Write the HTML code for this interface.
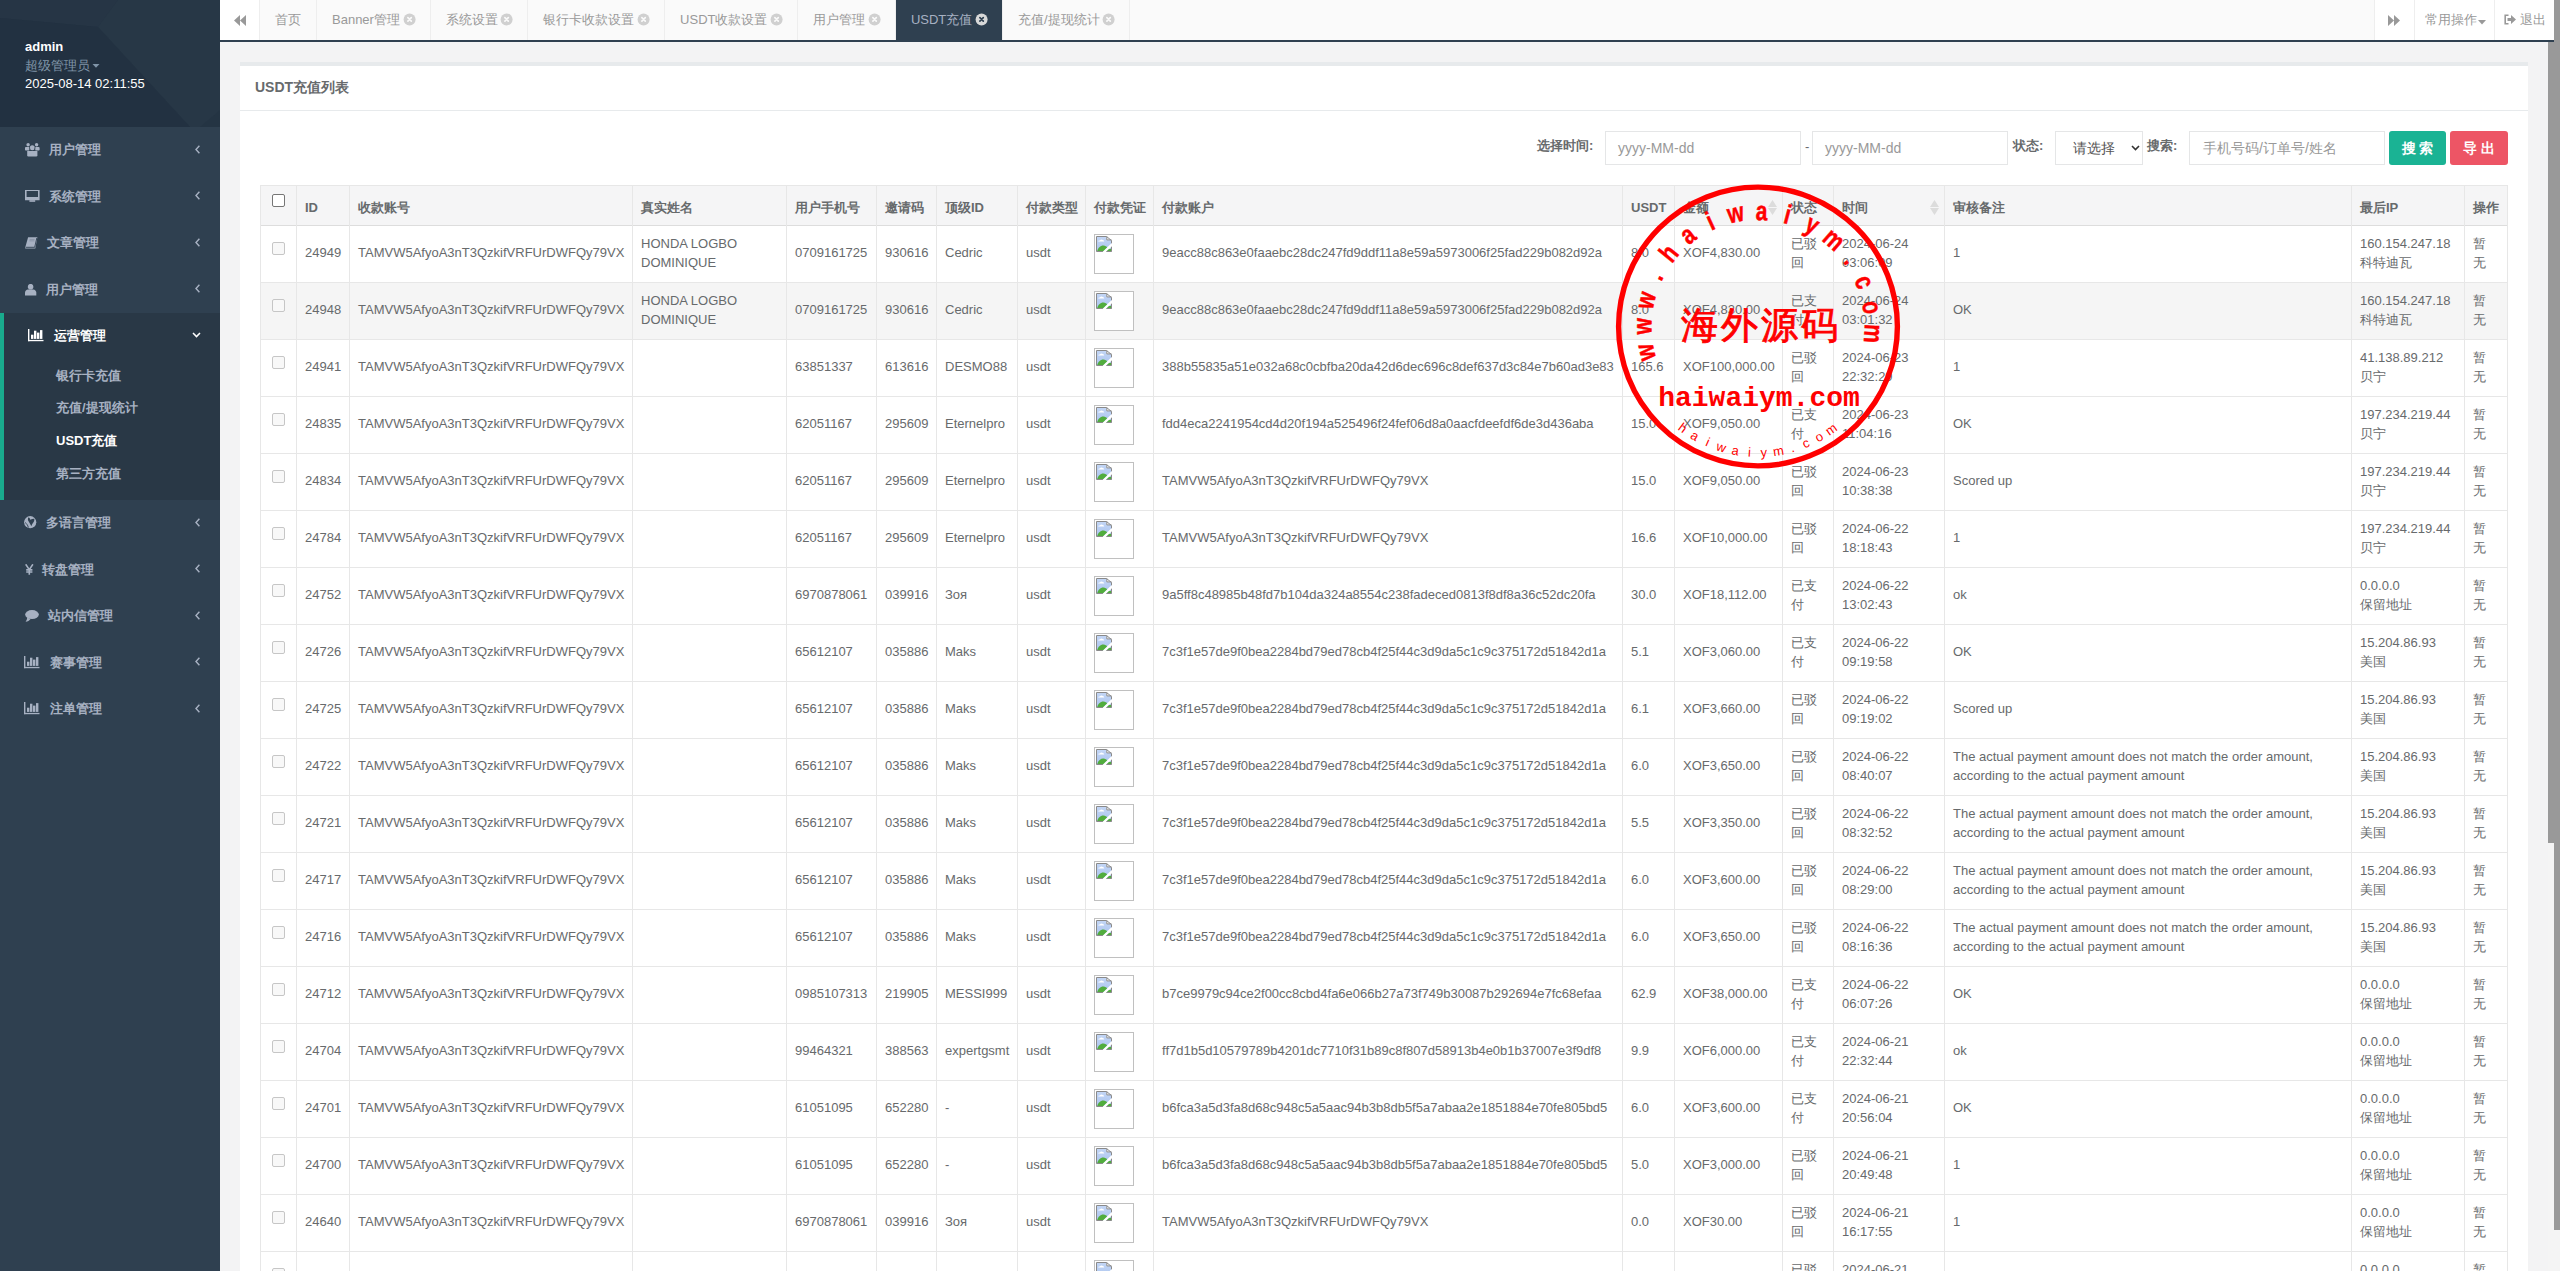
<!DOCTYPE html><html><head><meta charset="utf-8"><title>USDT充值</title><style>
*{box-sizing:border-box;margin:0;padding:0}
html,body{width:2560px;height:1271px;overflow:hidden}
body{position:relative;font-family:"Liberation Sans",sans-serif;font-size:13px;color:#676a6c;background:#f3f3f4;line-height:18.57px}
.abs{position:absolute}
#side{position:absolute;left:0;top:0;width:220px;height:1271px;background:#2f4050;overflow:hidden}
#hdr{position:absolute;left:0;top:0;width:220px;height:127px;background:#243443}
#hdr .t{position:absolute;left:25px;white-space:nowrap}
#menu{position:absolute;left:0;top:127px;width:220px}
#menu li{list-style:none;position:relative}
#menu > li > a{display:block;height:46.57px;padding:14px 20px 14px 25px;color:#a7b1c2;font-weight:bold;white-space:nowrap;position:relative}
#menu > li.active{background:#293846;border-left:4px solid #19aa8d}
#menu > li.active > a{color:#fff;padding-left:25px}
#menu .sub a{display:block;height:32.57px;padding:7px 10px 7px 52px;color:#a7b1c2;font-weight:bold;white-space:nowrap}
#menu .sub a.on{color:#fff}
#menu .sub{padding-bottom:10px}
#menu .ic{position:absolute;top:0;left:0}
#menu .lbl{position:absolute;top:14px}
#menu .arr{position:absolute;right:20px;top:20px;line-height:0}
#menu .arr svg{display:block}
#tabs{position:absolute;left:220px;top:0;width:2334px;height:42px;border-bottom:2px solid #2f4050;background:#fafafa}
#tabs .roll{position:absolute;top:0;height:40px;background:#fff;color:#999;text-align:center}
#tabs .pt{position:absolute;left:40px;top:0;height:40px;white-space:nowrap}
#tabs .pt a{float:left;height:40px;line-height:40px;padding:0 15px;border-right:1px solid #eee;color:#999;text-decoration:none}
#tabs .pt a.active{background:#2f4050;color:#a7b1c2}
.xc{display:inline-block;width:11.14px;height:11px;vertical-align:-1px;margin-left:3.6px}
#content{position:absolute;left:220px;top:42px;width:2328px;height:1229px;background:#f3f3f4}
#sb1{position:absolute;left:2548px;top:42px;width:6px;height:1229px;background:#f4f4f4}
#sb1 i{position:absolute;left:0;top:0;width:6px;height:801px;background:#999}
#sb2{position:absolute;left:2554px;top:0;width:6px;height:1271px;background:#f4f4f4}
#sb2 i{position:absolute;left:0;top:0;width:6px;height:1230px;background:#999}
#ibox{position:absolute;left:240px;top:62px;width:2288px;height:1300px;background:#fff}
#ititle{position:absolute;left:0;top:0;width:2288px;height:48px;border-top:4px solid #e7eaec;background:#fff}
#ititle h5{position:absolute;left:15px;top:14px;font-size:14px;font-weight:bold;line-height:15.4px;color:#676a6c;white-space:nowrap}
#icont{position:absolute;left:0;top:48px;width:2288px;height:1300px;border-top:1px solid #e7eaec}
.lab{position:absolute;font-weight:bold;white-space:nowrap;color:#676a6c}
.inp{position:absolute;top:131px;height:34px;border:1px solid #e5e6e7;background:#fff;color:#999;padding:0 12px;line-height:32px;white-space:nowrap;font-size:14px}
.btn{position:absolute;top:131px;height:34px;border-radius:3px;color:#fff;font-weight:bold;text-align:center;line-height:34px;white-space:nowrap;font-size:14px}
.vl{position:absolute;width:1px;background:#e7e7e7}
.hl{position:absolute;height:1px;background:#e7e7e7}
.cell{position:absolute;padding:0 8px;line-height:19px;overflow:hidden}
.cell span{display:block}
.th{position:absolute;font-weight:bold;white-space:nowrap;line-height:19px}
.cb{position:absolute;width:13px;height:13px;border:1px solid #c6c6c6;border-radius:2px;background:#f8f8f8}
.img{position:absolute;width:40px;height:40px;border:1px solid #c0c0c0;background:#fff}
</style></head><body>
<div id="side">
<div id="hdr"><svg class="abs" style="left:0;top:0" width="220" height="127" viewBox="0 0 220 127"><rect width="220" height="127" fill="#243443"/><polygon points="0,0 118,0 98,27 0,18" fill="#263545"/><polygon points="118,0 220,0 220,110 200,127 190,127 98,27" fill="#273746"/><polygon points="0,18 98,27 190,127 0,127" fill="#223141"/></svg><div class="t" style="top:38px;color:#fff;font-weight:bold">admin</div><div class="t" style="top:57px;color:#8095a8">超级管理员<svg width="8" height="4" style="margin-left:2px;vertical-align:2px" viewBox="0 0 8 4"><path d="M0.5 0H7.5L4 3.8z" fill="#8095a8"/></svg></div><div class="t" style="top:75px;color:#fff">2025-08-14 02:11:55</div></div>
<ul id="menu">
<li><a><span class="ic" style="left:24.7px;top:15.7px"><svg width="15" height="14" viewBox="0 0 15 14"><g fill="#a7b1c2"><circle cx="3.1" cy="1.8" r="1.7"/><circle cx="11.6" cy="1.8" r="1.7"/><rect x="0" y="4.1" width="4.6" height="3.4" rx="0.8"/><rect x="10" y="4.1" width="4.6" height="3.4" rx="0.8"/><circle cx="7.3" cy="4.7" r="2.5"/><path d="M2.2 7.9H12.4V12.3Q12.4 13.5 11.2 13.5H3.4Q2.2 13.5 2.2 12.3z"/></g><path d="M4.6 4.3L4.8 7.6M10 4.3L9.8 7.6" stroke="#2f4050" stroke-width="0.7"/></svg></span><span class="lbl" style="left:49px">用户管理</span><span class="arr" style="right:20px;top:17.5px"><svg width="5" height="9" viewBox="0 0 5 9"><path d="M4.4 0.8L1 4.5L4.4 8.2" fill="none" stroke="#a7b1c2" stroke-width="1.4"/></svg></span></a></li>
<li><a><span class="ic" style="left:24.7px;top:15.4px"><svg width="15" height="12" viewBox="0 0 15 12"><path fill="#a7b1c2" fill-rule="evenodd" d="M0 0H14.6V10.2H0z M1.6 1.1V6.9H13V1.1z"/><rect x="4.4" y="10.2" width="5.8" height="1.6" fill="#a7b1c2"/></svg></span><span class="lbl" style="left:49px">系统管理</span><span class="arr" style="right:20px;top:17.5px"><svg width="5" height="9" viewBox="0 0 5 9"><path d="M4.4 0.8L1 4.5L4.4 8.2" fill="none" stroke="#a7b1c2" stroke-width="1.4"/></svg></span></a></li>
<li><a><span class="ic" style="left:24.7px;top:16.3px"><svg width="13" height="12" viewBox="0 0 13 12"><path d="M3.1 0.3H12.4L10.3 11.6H0.2L0.5 9.6z" fill="#a7b1c2"/><path d="M0.9 10.3H9.7L11.8 1" fill="none" stroke="#2f4050" stroke-width="0.9"/><rect x="4.6" y="1.9" width="5" height="0.9" fill="#8893a6"/><rect x="4.4" y="3.4" width="5" height="0.9" fill="#8893a6"/></svg></span><span class="lbl" style="left:47px">文章管理</span><span class="arr" style="right:20px;top:17.5px"><svg width="5" height="9" viewBox="0 0 5 9"><path d="M4.4 0.8L1 4.5L4.4 8.2" fill="none" stroke="#a7b1c2" stroke-width="1.4"/></svg></span></a></li>
<li><a><span class="ic" style="left:24.7px;top:15.9px"><svg width="12" height="12" viewBox="0 0 12 12"><g fill="#a7b1c2"><circle cx="5.6" cy="2.7" r="2.8"/><path d="M0 11.6V8.6C0 6.6 1.4 5.6 3 5.4H8.3C9.9 5.6 11.3 6.6 11.3 8.6V11.6z"/></g></svg></span><span class="lbl" style="left:45.5px">用户管理</span><span class="arr" style="right:20px;top:17.5px"><svg width="5" height="9" viewBox="0 0 5 9"><path d="M4.4 0.8L1 4.5L4.4 8.2" fill="none" stroke="#a7b1c2" stroke-width="1.4"/></svg></span></a></li>
<li class="active"><a><span class="ic" style="left:24px;top:15.7px"><svg width="16" height="13" viewBox="0 0 16 13"><g fill="#fff"><rect x="0" y="0" width="1.4" height="12.2"/><rect x="0" y="10.9" width="15.5" height="1.3"/><rect x="3" y="5.7" width="2.4" height="4.2"/><rect x="6" y="1.7" width="2.4" height="8.2"/><rect x="9" y="3.6" width="2.4" height="6.3"/><rect x="12" y="1.1" width="2.4" height="8.8"/></g></svg></span><span class="lbl" style="left:49.8px">运营管理</span><span class="arr" style="right:19px;top:19px"><svg width="9" height="6" viewBox="0 0 9 6"><path d="M1 1L4.5 4.6L8 1" fill="none" stroke="#fff" stroke-width="1.5"/></svg></span></a>
<div class="sub"><a>银行卡充值</a><a>充值/提现统计</a><a class="on">USDT充值</a><a>第三方充值</a></div></li>
<li><a><span class="ic" style="left:24.4px;top:15.7px"><svg width="13" height="13" viewBox="0 0 13 13"><circle cx="6.2" cy="6.2" r="6.1" fill="#a7b1c2"/><path d="M4.2 1.6C5.3 1.3 6.2 2.6 6.1 3.7C7.5 3.2 9 3 10.2 2.8C10.7 4.2 10.1 6 8.6 7.5C7.9 8.4 7.6 9.6 7.4 10.3C6.8 9 6.1 7.9 5.3 6.4C4.5 5.3 3.8 4.5 3.9 3.3z" fill="#2f4050"/><path d="M1.2 6.5C2.5 7.5 3.8 9.3 4.4 11.5" fill="none" stroke="#2f4050" stroke-width="0.9"/></svg></span><span class="lbl" style="left:46px">多语言管理</span><span class="arr" style="right:20px;top:17.5px"><svg width="5" height="9" viewBox="0 0 5 9"><path d="M4.4 0.8L1 4.5L4.4 8.2" fill="none" stroke="#a7b1c2" stroke-width="1.4"/></svg></span></a></li>
<li><a><span class="ic" style="left:24.8px;top:15.8px"><svg width="9" height="11" viewBox="0 0 9 11"><path d="M0.7 0.3L4.3 5.6L7.9 0.3M4.3 5.6V10.8M1.2 5.9H7.4M1.2 8H7.4" fill="none" stroke="#a7b1c2" stroke-width="1.6"/></svg></span><span class="lbl" style="left:42px">转盘管理</span><span class="arr" style="right:20px;top:17.5px"><svg width="5" height="9" viewBox="0 0 5 9"><path d="M4.4 0.8L1 4.5L4.4 8.2" fill="none" stroke="#a7b1c2" stroke-width="1.4"/></svg></span></a></li>
<li><a><span class="ic" style="left:24.7px;top:15.8px"><svg width="14" height="12" viewBox="0 0 14 12"><ellipse cx="7" cy="4.6" rx="6.85" ry="4.5" fill="#a7b1c2"/><path d="M2.2 7.6C2.1 9.3 1.5 10.7 0.6 11.8C2.6 11.5 4.5 10.5 5.6 8.9z" fill="#a7b1c2"/></svg></span><span class="lbl" style="left:48px">站内信管理</span><span class="arr" style="right:20px;top:17.5px"><svg width="5" height="9" viewBox="0 0 5 9"><path d="M4.4 0.8L1 4.5L4.4 8.2" fill="none" stroke="#a7b1c2" stroke-width="1.4"/></svg></span></a></li>
<li><a><span class="ic" style="left:24.4px;top:15.8px"><svg width="16" height="13" viewBox="0 0 16 13"><g fill="#a7b1c2"><rect x="0" y="0" width="1.4" height="12.2"/><rect x="0" y="10.9" width="15.5" height="1.3"/><rect x="3" y="5.7" width="2.4" height="4.2"/><rect x="6" y="1.7" width="2.4" height="8.2"/><rect x="9" y="3.6" width="2.4" height="6.3"/><rect x="12" y="1.1" width="2.4" height="8.8"/></g></svg></span><span class="lbl" style="left:49.7px">赛事管理</span><span class="arr" style="right:20px;top:17.5px"><svg width="5" height="9" viewBox="0 0 5 9"><path d="M4.4 0.8L1 4.5L4.4 8.2" fill="none" stroke="#a7b1c2" stroke-width="1.4"/></svg></span></a></li>
<li><a><span class="ic" style="left:24.4px;top:15.8px"><svg width="16" height="13" viewBox="0 0 16 13"><g fill="#a7b1c2"><rect x="0" y="0" width="1.4" height="12.2"/><rect x="0" y="10.9" width="15.5" height="1.3"/><rect x="3" y="5.7" width="2.4" height="4.2"/><rect x="6" y="1.7" width="2.4" height="8.2"/><rect x="9" y="3.6" width="2.4" height="6.3"/><rect x="12" y="1.1" width="2.4" height="8.8"/></g></svg></span><span class="lbl" style="left:49.7px">注单管理</span><span class="arr" style="right:20px;top:17.5px"><svg width="5" height="9" viewBox="0 0 5 9"><path d="M4.4 0.8L1 4.5L4.4 8.2" fill="none" stroke="#a7b1c2" stroke-width="1.4"/></svg></span></a></li>
</ul></div>
<div id="tabs">
<div class="roll" style="left:0;width:40px;border-right:1px solid #eee"><svg class="abs" style="left:14px;top:15px" width="12" height="11" viewBox="0 0 12 11"><path d="M6 0L0 5.5L6 11zM12 0L6 5.5L12 11z" fill="#999"/></svg></div>
<div class="pt">
<a>首页</a>
<a>Banner管理<svg class="xc" viewBox="0 0 11.14 11" style="overflow:visible"><circle cx="5.6" cy="5.4" r="6" fill="#d0d0d0"/><path d="M3.9 3.7L7.3 7.1M7.3 3.7L3.9 7.1" stroke="#fafafa" stroke-width="1.7" stroke-linecap="round"/></svg></a>
<a>系统设置<svg class="xc" viewBox="0 0 11.14 11" style="overflow:visible"><circle cx="5.6" cy="5.4" r="6" fill="#d0d0d0"/><path d="M3.9 3.7L7.3 7.1M7.3 3.7L3.9 7.1" stroke="#fafafa" stroke-width="1.7" stroke-linecap="round"/></svg></a>
<a>银行卡收款设置<svg class="xc" viewBox="0 0 11.14 11" style="overflow:visible"><circle cx="5.6" cy="5.4" r="6" fill="#d0d0d0"/><path d="M3.9 3.7L7.3 7.1M7.3 3.7L3.9 7.1" stroke="#fafafa" stroke-width="1.7" stroke-linecap="round"/></svg></a>
<a>USDT收款设置<svg class="xc" viewBox="0 0 11.14 11" style="overflow:visible"><circle cx="5.6" cy="5.4" r="6" fill="#d0d0d0"/><path d="M3.9 3.7L7.3 7.1M7.3 3.7L3.9 7.1" stroke="#fafafa" stroke-width="1.7" stroke-linecap="round"/></svg></a>
<a>用户管理<svg class="xc" viewBox="0 0 11.14 11" style="overflow:visible"><circle cx="5.6" cy="5.4" r="6" fill="#d0d0d0"/><path d="M3.9 3.7L7.3 7.1M7.3 3.7L3.9 7.1" stroke="#fafafa" stroke-width="1.7" stroke-linecap="round"/></svg></a>
<a class="active">USDT充值<svg class="xc" viewBox="0 0 11.14 11" style="overflow:visible"><circle cx="5.6" cy="5.4" r="6" fill="#d8d8d8"/><path d="M3.9 3.7L7.3 7.1M7.3 3.7L3.9 7.1" stroke="#2f4050" stroke-width="1.7" stroke-linecap="round"/></svg></a>
<a>充值/提现统计<svg class="xc" viewBox="0 0 11.14 11" style="overflow:visible"><circle cx="5.6" cy="5.4" r="6" fill="#d0d0d0"/><path d="M3.9 3.7L7.3 7.1M7.3 3.7L3.9 7.1" stroke="#fafafa" stroke-width="1.7" stroke-linecap="round"/></svg></a>
</div>
<div class="roll" style="left:2154px;width:40px;border-left:1px solid #eee"><svg class="abs" style="left:13px;top:15px" width="12" height="11" viewBox="0 0 12 11"><path d="M0 0L6 5.5L0 11zM6 0L12 5.5L6 11z" fill="#999"/></svg></div>
<div class="roll" style="left:2194px;width:80px;border-left:1px solid #eee;line-height:39px;text-align:left;padding-left:10px">常用操作<svg width="8" height="5" style="margin-left:1px;vertical-align:-1px" viewBox="0 0 8 5"><path d="M0 0H8L4 4.5z" fill="#999"/></svg></div>
<div class="roll" style="left:2274px;width:60px;border-left:1px solid #eee;line-height:40px;text-align:left;padding-left:9px"><svg width="12" height="11" style="vertical-align:-1px" viewBox="0 0 12 11"><path d="M4.5 1.2H1.2V9.8H4.5" fill="none" stroke="#999" stroke-width="1.6"/><path d="M3.5 4H7V1L12 5.5L7 10V7H3.5z" fill="#999"/></svg> 退出</div>
</div>
<div id="content"></div>
<div id="ibox"><div id="ititle"><h5>USDT充值列表</h5></div><div id="icont"></div></div>
<div id="sb1"><i></i></div><div id="sb2"><i></i></div>
<div class="lab" style="left:1537px;top:137px">选择时间:</div>
<div class="inp" style="left:1605px;width:196px">yyyy-MM-dd</div>
<div class="abs" style="left:1805px;top:138px">-</div>
<div class="inp" style="left:1812px;width:196px">yyyy-MM-dd</div>
<div class="lab" style="left:2013px;top:137px">状态:</div>
<div class="inp" style="left:2055px;width:88px;color:#555;padding-left:17px">请选择<svg class="abs" style="left:75px;top:13px" width="9" height="6" viewBox="0 0 9 6"><path d="M1 1L4.5 4.5L8 1" fill="none" stroke="#333" stroke-width="1.6"/></svg></div>
<div class="lab" style="left:2147px;top:137px">搜索:</div>
<div class="inp" style="left:2189px;width:196px;padding-left:13px">手机号码/订单号/姓名</div>
<div class="btn" style="left:2389px;width:57px;background:#1ab394">搜&nbsp;索</div>
<div class="btn" style="left:2450px;width:58px;background:#ed5565">导&nbsp;出</div>
<div class="abs" style="left:260px;top:185px;width:2248px;height:40px;background:#f5f5f6"></div>
<div class="abs" style="left:260px;top:282px;width:2248px;height:57px;background:#f5f5f5"></div>
<div class="hl" style="left:260px;top:185px;width:2248px"></div>
<div class="hl" style="left:260px;top:225px;width:2248px;background:#dddddd"></div>
<div class="hl" style="left:260px;top:282px;width:2248px"></div>
<div class="hl" style="left:260px;top:339px;width:2248px"></div>
<div class="hl" style="left:260px;top:396px;width:2248px"></div>
<div class="hl" style="left:260px;top:453px;width:2248px"></div>
<div class="hl" style="left:260px;top:510px;width:2248px"></div>
<div class="hl" style="left:260px;top:567px;width:2248px"></div>
<div class="hl" style="left:260px;top:624px;width:2248px"></div>
<div class="hl" style="left:260px;top:681px;width:2248px"></div>
<div class="hl" style="left:260px;top:738px;width:2248px"></div>
<div class="hl" style="left:260px;top:795px;width:2248px"></div>
<div class="hl" style="left:260px;top:852px;width:2248px"></div>
<div class="hl" style="left:260px;top:909px;width:2248px"></div>
<div class="hl" style="left:260px;top:966px;width:2248px"></div>
<div class="hl" style="left:260px;top:1023px;width:2248px"></div>
<div class="hl" style="left:260px;top:1080px;width:2248px"></div>
<div class="hl" style="left:260px;top:1137px;width:2248px"></div>
<div class="hl" style="left:260px;top:1194px;width:2248px"></div>
<div class="hl" style="left:260px;top:1251px;width:2248px"></div>
<div class="vl" style="left:260px;top:185px;height:1086px"></div>
<div class="vl" style="left:296px;top:185px;height:1086px"></div>
<div class="vl" style="left:349px;top:185px;height:1086px"></div>
<div class="vl" style="left:632px;top:185px;height:1086px"></div>
<div class="vl" style="left:786px;top:185px;height:1086px"></div>
<div class="vl" style="left:876px;top:185px;height:1086px"></div>
<div class="vl" style="left:936px;top:185px;height:1086px"></div>
<div class="vl" style="left:1017px;top:185px;height:1086px"></div>
<div class="vl" style="left:1085px;top:185px;height:1086px"></div>
<div class="vl" style="left:1153px;top:185px;height:1086px"></div>
<div class="vl" style="left:1622px;top:185px;height:1086px"></div>
<div class="vl" style="left:1674px;top:185px;height:1086px"></div>
<div class="vl" style="left:1782px;top:185px;height:1086px"></div>
<div class="vl" style="left:1833px;top:185px;height:1086px"></div>
<div class="vl" style="left:1944px;top:185px;height:1086px"></div>
<div class="vl" style="left:2351px;top:185px;height:1086px"></div>
<div class="vl" style="left:2464px;top:185px;height:1086px"></div>
<div class="vl" style="left:2507px;top:185px;height:1086px"></div>
<div class="abs" style="left:272px;top:194px;width:13px;height:13px;border:1px solid #767676;border-radius:2px;background:#fff"></div>
<div class="th" style="left:305px;top:198px">ID</div>
<div class="th" style="left:358px;top:198px">收款账号</div>
<div class="th" style="left:641px;top:198px">真实姓名</div>
<div class="th" style="left:795px;top:198px">用户手机号</div>
<div class="th" style="left:885px;top:198px">邀请码</div>
<div class="th" style="left:945px;top:198px">顶级ID</div>
<div class="th" style="left:1026px;top:198px">付款类型</div>
<div class="th" style="left:1094px;top:198px">付款凭证</div>
<div class="th" style="left:1162px;top:198px">付款账户</div>
<div class="th" style="left:1631px;top:198px">USDT</div>
<div class="th" style="left:1683px;top:198px">金额</div>
<div class="th" style="left:1791px;top:198px">状态</div>
<div class="th" style="left:1842px;top:198px">时间</div>
<div class="th" style="left:1953px;top:198px">审核备注</div>
<div class="th" style="left:2360px;top:198px">最后IP</div>
<div class="th" style="left:2473px;top:198px">操作</div>
<div class="abs" style="left:1768px;top:200px;line-height:0"><svg width="9" height="15" viewBox="0 0 9 15"><path d="M4.5 0L9 7H0z" fill="#dcdcdc"/><path d="M0 8H9L4.5 15z" fill="#dcdcdc"/></svg></div>
<div class="abs" style="left:1930px;top:200px;line-height:0"><svg width="9" height="15" viewBox="0 0 9 15"><path d="M4.5 0L9 7H0z" fill="#dcdcdc"/><path d="M0 8H9L4.5 15z" fill="#dcdcdc"/></svg></div>
<div class="cb" style="left:272px;top:242px"></div>
<div class="cell" style="left:297px;top:243px;width:52px"><span>24949</span></div>
<div class="cell" style="left:350px;top:243px;width:282px"><span>TAMVW5AfyoA3nT3QzkifVRFUrDWFQy79VX</span></div>
<div class="cell" style="left:633px;top:234px;width:153px"><span>HONDA LOGBO DOMINIQUE</span></div>
<div class="cell" style="left:787px;top:243px;width:89px"><span>0709161725</span></div>
<div class="cell" style="left:877px;top:243px;width:59px"><span>930616</span></div>
<div class="cell" style="left:937px;top:243px;width:80px"><span>Cedric</span></div>
<div class="cell" style="left:1018px;top:243px;width:67px"><span>usdt</span></div>
<div class="img" style="left:1094px;top:234px"><span class="abs" style="left:1px;top:1px;line-height:0"><svg width="16" height="16" viewBox="0 0 16 16"><defs><linearGradient id="sky" x1="0" y1="0" x2="0" y2="1"><stop offset="0" stop-color="#c4d7f6"/><stop offset="1" stop-color="#aac3ee"/></linearGradient><clipPath id="pg"><path d="M0.5 0.5H10.5L15.5 4.5V7.3L6.8 15.5H0.5z M15.5 10.7V15.5H10.4z"/></clipPath></defs><g clip-path="url(#pg)"><rect x="0" y="0" width="16" height="16" fill="url(#sky)"/><path d="M1 16C1.8 12 4.5 9.6 7.3 9.6C9.3 9.6 10.6 10.6 11.4 11.8L15 15L14 16z" fill="#51ad3d"/><path d="M11.2 16C11.8 13.6 13 12.8 14 12.8C15 12.8 15.5 13.6 16 14.5V16z" fill="#51ad3d"/><path d="M2.2 5.6C2.3 4.6 3.2 4.3 3.9 4.6C4.4 3.3 6.2 3.1 7 4.2C7.8 4.2 8.3 4.8 8.2 5.6z" fill="#fff"/><path d="M10.5 0.5V4H15.5z" fill="#fff"/></g><path d="M6.8 15.5H0.5V0.5H10.5L15.5 4.5V7.3M15.5 10.7V15.5H10.4M10.8 0.5V3.9H15.5" fill="none" stroke="#8a8a8a" stroke-width="1"/></svg></span></div>
<div class="cell" style="left:1154px;top:243px;width:468px"><span>9eacc88c863e0faaebc28dc247fd9ddf11a8e59a5973006f25fad229b082d92a</span></div>
<div class="cell" style="left:1623px;top:243px;width:51px"><span>8.0</span></div>
<div class="cell" style="left:1675px;top:243px;width:107px"><span>XOF4,830.00</span></div>
<div class="cell" style="left:1783px;top:234px;width:50px"><span>已驳回</span></div>
<div class="cell" style="left:1834px;top:234px;width:110px"><span>2024-06-24<br>03:06:09</span></div>
<div class="cell" style="left:1945px;top:243px;width:406px"><span>1</span></div>
<div class="cell" style="left:2352px;top:234px;width:112px"><span>160.154.247.18<br>科特迪瓦</span></div>
<div class="cell" style="left:2465px;top:234px;width:42px"><span>暂<br>无</span></div>
<div class="cb" style="left:272px;top:299px"></div>
<div class="cell" style="left:297px;top:300px;width:52px"><span>24948</span></div>
<div class="cell" style="left:350px;top:300px;width:282px"><span>TAMVW5AfyoA3nT3QzkifVRFUrDWFQy79VX</span></div>
<div class="cell" style="left:633px;top:291px;width:153px"><span>HONDA LOGBO DOMINIQUE</span></div>
<div class="cell" style="left:787px;top:300px;width:89px"><span>0709161725</span></div>
<div class="cell" style="left:877px;top:300px;width:59px"><span>930616</span></div>
<div class="cell" style="left:937px;top:300px;width:80px"><span>Cedric</span></div>
<div class="cell" style="left:1018px;top:300px;width:67px"><span>usdt</span></div>
<div class="img" style="left:1094px;top:291px"><span class="abs" style="left:1px;top:1px;line-height:0"><svg width="16" height="16" viewBox="0 0 16 16"><defs><linearGradient id="sky" x1="0" y1="0" x2="0" y2="1"><stop offset="0" stop-color="#c4d7f6"/><stop offset="1" stop-color="#aac3ee"/></linearGradient><clipPath id="pg"><path d="M0.5 0.5H10.5L15.5 4.5V7.3L6.8 15.5H0.5z M15.5 10.7V15.5H10.4z"/></clipPath></defs><g clip-path="url(#pg)"><rect x="0" y="0" width="16" height="16" fill="url(#sky)"/><path d="M1 16C1.8 12 4.5 9.6 7.3 9.6C9.3 9.6 10.6 10.6 11.4 11.8L15 15L14 16z" fill="#51ad3d"/><path d="M11.2 16C11.8 13.6 13 12.8 14 12.8C15 12.8 15.5 13.6 16 14.5V16z" fill="#51ad3d"/><path d="M2.2 5.6C2.3 4.6 3.2 4.3 3.9 4.6C4.4 3.3 6.2 3.1 7 4.2C7.8 4.2 8.3 4.8 8.2 5.6z" fill="#fff"/><path d="M10.5 0.5V4H15.5z" fill="#fff"/></g><path d="M6.8 15.5H0.5V0.5H10.5L15.5 4.5V7.3M15.5 10.7V15.5H10.4M10.8 0.5V3.9H15.5" fill="none" stroke="#8a8a8a" stroke-width="1"/></svg></span></div>
<div class="cell" style="left:1154px;top:300px;width:468px"><span>9eacc88c863e0faaebc28dc247fd9ddf11a8e59a5973006f25fad229b082d92a</span></div>
<div class="cell" style="left:1623px;top:300px;width:51px"><span>8.0</span></div>
<div class="cell" style="left:1675px;top:300px;width:107px"><span>XOF4,830.00</span></div>
<div class="cell" style="left:1783px;top:291px;width:50px"><span>已支付</span></div>
<div class="cell" style="left:1834px;top:291px;width:110px"><span>2024-06-24<br>03:01:32</span></div>
<div class="cell" style="left:1945px;top:300px;width:406px"><span>OK</span></div>
<div class="cell" style="left:2352px;top:291px;width:112px"><span>160.154.247.18<br>科特迪瓦</span></div>
<div class="cell" style="left:2465px;top:291px;width:42px"><span>暂<br>无</span></div>
<div class="cb" style="left:272px;top:356px"></div>
<div class="cell" style="left:297px;top:357px;width:52px"><span>24941</span></div>
<div class="cell" style="left:350px;top:357px;width:282px"><span>TAMVW5AfyoA3nT3QzkifVRFUrDWFQy79VX</span></div>
<div class="cell" style="left:787px;top:357px;width:89px"><span>63851337</span></div>
<div class="cell" style="left:877px;top:357px;width:59px"><span>613616</span></div>
<div class="cell" style="left:937px;top:357px;width:80px"><span>DESMO88</span></div>
<div class="cell" style="left:1018px;top:357px;width:67px"><span>usdt</span></div>
<div class="img" style="left:1094px;top:348px"><span class="abs" style="left:1px;top:1px;line-height:0"><svg width="16" height="16" viewBox="0 0 16 16"><defs><linearGradient id="sky" x1="0" y1="0" x2="0" y2="1"><stop offset="0" stop-color="#c4d7f6"/><stop offset="1" stop-color="#aac3ee"/></linearGradient><clipPath id="pg"><path d="M0.5 0.5H10.5L15.5 4.5V7.3L6.8 15.5H0.5z M15.5 10.7V15.5H10.4z"/></clipPath></defs><g clip-path="url(#pg)"><rect x="0" y="0" width="16" height="16" fill="url(#sky)"/><path d="M1 16C1.8 12 4.5 9.6 7.3 9.6C9.3 9.6 10.6 10.6 11.4 11.8L15 15L14 16z" fill="#51ad3d"/><path d="M11.2 16C11.8 13.6 13 12.8 14 12.8C15 12.8 15.5 13.6 16 14.5V16z" fill="#51ad3d"/><path d="M2.2 5.6C2.3 4.6 3.2 4.3 3.9 4.6C4.4 3.3 6.2 3.1 7 4.2C7.8 4.2 8.3 4.8 8.2 5.6z" fill="#fff"/><path d="M10.5 0.5V4H15.5z" fill="#fff"/></g><path d="M6.8 15.5H0.5V0.5H10.5L15.5 4.5V7.3M15.5 10.7V15.5H10.4M10.8 0.5V3.9H15.5" fill="none" stroke="#8a8a8a" stroke-width="1"/></svg></span></div>
<div class="cell" style="left:1154px;top:357px;width:468px"><span>388b55835a51e032a68c0cbfba20da42d6dec696c8def637d3c84e7b60ad3e83</span></div>
<div class="cell" style="left:1623px;top:357px;width:51px"><span>165.6</span></div>
<div class="cell" style="left:1675px;top:357px;width:107px"><span>XOF100,000.00</span></div>
<div class="cell" style="left:1783px;top:348px;width:50px"><span>已驳回</span></div>
<div class="cell" style="left:1834px;top:348px;width:110px"><span>2024-06-23<br>22:32:29</span></div>
<div class="cell" style="left:1945px;top:357px;width:406px"><span>1</span></div>
<div class="cell" style="left:2352px;top:348px;width:112px"><span>41.138.89.212<br>贝宁</span></div>
<div class="cell" style="left:2465px;top:348px;width:42px"><span>暂<br>无</span></div>
<div class="cb" style="left:272px;top:413px"></div>
<div class="cell" style="left:297px;top:414px;width:52px"><span>24835</span></div>
<div class="cell" style="left:350px;top:414px;width:282px"><span>TAMVW5AfyoA3nT3QzkifVRFUrDWFQy79VX</span></div>
<div class="cell" style="left:787px;top:414px;width:89px"><span>62051167</span></div>
<div class="cell" style="left:877px;top:414px;width:59px"><span>295609</span></div>
<div class="cell" style="left:937px;top:414px;width:80px"><span>Eternelpro</span></div>
<div class="cell" style="left:1018px;top:414px;width:67px"><span>usdt</span></div>
<div class="img" style="left:1094px;top:405px"><span class="abs" style="left:1px;top:1px;line-height:0"><svg width="16" height="16" viewBox="0 0 16 16"><defs><linearGradient id="sky" x1="0" y1="0" x2="0" y2="1"><stop offset="0" stop-color="#c4d7f6"/><stop offset="1" stop-color="#aac3ee"/></linearGradient><clipPath id="pg"><path d="M0.5 0.5H10.5L15.5 4.5V7.3L6.8 15.5H0.5z M15.5 10.7V15.5H10.4z"/></clipPath></defs><g clip-path="url(#pg)"><rect x="0" y="0" width="16" height="16" fill="url(#sky)"/><path d="M1 16C1.8 12 4.5 9.6 7.3 9.6C9.3 9.6 10.6 10.6 11.4 11.8L15 15L14 16z" fill="#51ad3d"/><path d="M11.2 16C11.8 13.6 13 12.8 14 12.8C15 12.8 15.5 13.6 16 14.5V16z" fill="#51ad3d"/><path d="M2.2 5.6C2.3 4.6 3.2 4.3 3.9 4.6C4.4 3.3 6.2 3.1 7 4.2C7.8 4.2 8.3 4.8 8.2 5.6z" fill="#fff"/><path d="M10.5 0.5V4H15.5z" fill="#fff"/></g><path d="M6.8 15.5H0.5V0.5H10.5L15.5 4.5V7.3M15.5 10.7V15.5H10.4M10.8 0.5V3.9H15.5" fill="none" stroke="#8a8a8a" stroke-width="1"/></svg></span></div>
<div class="cell" style="left:1154px;top:414px;width:468px"><span>fdd4eca2241954cd4d20f194a525496f24fef06d8a0aacfdeefdf6de3d436aba</span></div>
<div class="cell" style="left:1623px;top:414px;width:51px"><span>15.0</span></div>
<div class="cell" style="left:1675px;top:414px;width:107px"><span>XOF9,050.00</span></div>
<div class="cell" style="left:1783px;top:405px;width:50px"><span>已支付</span></div>
<div class="cell" style="left:1834px;top:405px;width:110px"><span>2024-06-23<br>11:04:16</span></div>
<div class="cell" style="left:1945px;top:414px;width:406px"><span>OK</span></div>
<div class="cell" style="left:2352px;top:405px;width:112px"><span>197.234.219.44<br>贝宁</span></div>
<div class="cell" style="left:2465px;top:405px;width:42px"><span>暂<br>无</span></div>
<div class="cb" style="left:272px;top:470px"></div>
<div class="cell" style="left:297px;top:471px;width:52px"><span>24834</span></div>
<div class="cell" style="left:350px;top:471px;width:282px"><span>TAMVW5AfyoA3nT3QzkifVRFUrDWFQy79VX</span></div>
<div class="cell" style="left:787px;top:471px;width:89px"><span>62051167</span></div>
<div class="cell" style="left:877px;top:471px;width:59px"><span>295609</span></div>
<div class="cell" style="left:937px;top:471px;width:80px"><span>Eternelpro</span></div>
<div class="cell" style="left:1018px;top:471px;width:67px"><span>usdt</span></div>
<div class="img" style="left:1094px;top:462px"><span class="abs" style="left:1px;top:1px;line-height:0"><svg width="16" height="16" viewBox="0 0 16 16"><defs><linearGradient id="sky" x1="0" y1="0" x2="0" y2="1"><stop offset="0" stop-color="#c4d7f6"/><stop offset="1" stop-color="#aac3ee"/></linearGradient><clipPath id="pg"><path d="M0.5 0.5H10.5L15.5 4.5V7.3L6.8 15.5H0.5z M15.5 10.7V15.5H10.4z"/></clipPath></defs><g clip-path="url(#pg)"><rect x="0" y="0" width="16" height="16" fill="url(#sky)"/><path d="M1 16C1.8 12 4.5 9.6 7.3 9.6C9.3 9.6 10.6 10.6 11.4 11.8L15 15L14 16z" fill="#51ad3d"/><path d="M11.2 16C11.8 13.6 13 12.8 14 12.8C15 12.8 15.5 13.6 16 14.5V16z" fill="#51ad3d"/><path d="M2.2 5.6C2.3 4.6 3.2 4.3 3.9 4.6C4.4 3.3 6.2 3.1 7 4.2C7.8 4.2 8.3 4.8 8.2 5.6z" fill="#fff"/><path d="M10.5 0.5V4H15.5z" fill="#fff"/></g><path d="M6.8 15.5H0.5V0.5H10.5L15.5 4.5V7.3M15.5 10.7V15.5H10.4M10.8 0.5V3.9H15.5" fill="none" stroke="#8a8a8a" stroke-width="1"/></svg></span></div>
<div class="cell" style="left:1154px;top:471px;width:468px"><span>TAMVW5AfyoA3nT3QzkifVRFUrDWFQy79VX</span></div>
<div class="cell" style="left:1623px;top:471px;width:51px"><span>15.0</span></div>
<div class="cell" style="left:1675px;top:471px;width:107px"><span>XOF9,050.00</span></div>
<div class="cell" style="left:1783px;top:462px;width:50px"><span>已驳回</span></div>
<div class="cell" style="left:1834px;top:462px;width:110px"><span>2024-06-23<br>10:38:38</span></div>
<div class="cell" style="left:1945px;top:471px;width:406px"><span>Scored up</span></div>
<div class="cell" style="left:2352px;top:462px;width:112px"><span>197.234.219.44<br>贝宁</span></div>
<div class="cell" style="left:2465px;top:462px;width:42px"><span>暂<br>无</span></div>
<div class="cb" style="left:272px;top:527px"></div>
<div class="cell" style="left:297px;top:528px;width:52px"><span>24784</span></div>
<div class="cell" style="left:350px;top:528px;width:282px"><span>TAMVW5AfyoA3nT3QzkifVRFUrDWFQy79VX</span></div>
<div class="cell" style="left:787px;top:528px;width:89px"><span>62051167</span></div>
<div class="cell" style="left:877px;top:528px;width:59px"><span>295609</span></div>
<div class="cell" style="left:937px;top:528px;width:80px"><span>Eternelpro</span></div>
<div class="cell" style="left:1018px;top:528px;width:67px"><span>usdt</span></div>
<div class="img" style="left:1094px;top:519px"><span class="abs" style="left:1px;top:1px;line-height:0"><svg width="16" height="16" viewBox="0 0 16 16"><defs><linearGradient id="sky" x1="0" y1="0" x2="0" y2="1"><stop offset="0" stop-color="#c4d7f6"/><stop offset="1" stop-color="#aac3ee"/></linearGradient><clipPath id="pg"><path d="M0.5 0.5H10.5L15.5 4.5V7.3L6.8 15.5H0.5z M15.5 10.7V15.5H10.4z"/></clipPath></defs><g clip-path="url(#pg)"><rect x="0" y="0" width="16" height="16" fill="url(#sky)"/><path d="M1 16C1.8 12 4.5 9.6 7.3 9.6C9.3 9.6 10.6 10.6 11.4 11.8L15 15L14 16z" fill="#51ad3d"/><path d="M11.2 16C11.8 13.6 13 12.8 14 12.8C15 12.8 15.5 13.6 16 14.5V16z" fill="#51ad3d"/><path d="M2.2 5.6C2.3 4.6 3.2 4.3 3.9 4.6C4.4 3.3 6.2 3.1 7 4.2C7.8 4.2 8.3 4.8 8.2 5.6z" fill="#fff"/><path d="M10.5 0.5V4H15.5z" fill="#fff"/></g><path d="M6.8 15.5H0.5V0.5H10.5L15.5 4.5V7.3M15.5 10.7V15.5H10.4M10.8 0.5V3.9H15.5" fill="none" stroke="#8a8a8a" stroke-width="1"/></svg></span></div>
<div class="cell" style="left:1154px;top:528px;width:468px"><span>TAMVW5AfyoA3nT3QzkifVRFUrDWFQy79VX</span></div>
<div class="cell" style="left:1623px;top:528px;width:51px"><span>16.6</span></div>
<div class="cell" style="left:1675px;top:528px;width:107px"><span>XOF10,000.00</span></div>
<div class="cell" style="left:1783px;top:519px;width:50px"><span>已驳回</span></div>
<div class="cell" style="left:1834px;top:519px;width:110px"><span>2024-06-22<br>18:18:43</span></div>
<div class="cell" style="left:1945px;top:528px;width:406px"><span>1</span></div>
<div class="cell" style="left:2352px;top:519px;width:112px"><span>197.234.219.44<br>贝宁</span></div>
<div class="cell" style="left:2465px;top:519px;width:42px"><span>暂<br>无</span></div>
<div class="cb" style="left:272px;top:584px"></div>
<div class="cell" style="left:297px;top:585px;width:52px"><span>24752</span></div>
<div class="cell" style="left:350px;top:585px;width:282px"><span>TAMVW5AfyoA3nT3QzkifVRFUrDWFQy79VX</span></div>
<div class="cell" style="left:787px;top:585px;width:89px"><span>6970878061</span></div>
<div class="cell" style="left:877px;top:585px;width:59px"><span>039916</span></div>
<div class="cell" style="left:937px;top:585px;width:80px"><span>Зоя</span></div>
<div class="cell" style="left:1018px;top:585px;width:67px"><span>usdt</span></div>
<div class="img" style="left:1094px;top:576px"><span class="abs" style="left:1px;top:1px;line-height:0"><svg width="16" height="16" viewBox="0 0 16 16"><defs><linearGradient id="sky" x1="0" y1="0" x2="0" y2="1"><stop offset="0" stop-color="#c4d7f6"/><stop offset="1" stop-color="#aac3ee"/></linearGradient><clipPath id="pg"><path d="M0.5 0.5H10.5L15.5 4.5V7.3L6.8 15.5H0.5z M15.5 10.7V15.5H10.4z"/></clipPath></defs><g clip-path="url(#pg)"><rect x="0" y="0" width="16" height="16" fill="url(#sky)"/><path d="M1 16C1.8 12 4.5 9.6 7.3 9.6C9.3 9.6 10.6 10.6 11.4 11.8L15 15L14 16z" fill="#51ad3d"/><path d="M11.2 16C11.8 13.6 13 12.8 14 12.8C15 12.8 15.5 13.6 16 14.5V16z" fill="#51ad3d"/><path d="M2.2 5.6C2.3 4.6 3.2 4.3 3.9 4.6C4.4 3.3 6.2 3.1 7 4.2C7.8 4.2 8.3 4.8 8.2 5.6z" fill="#fff"/><path d="M10.5 0.5V4H15.5z" fill="#fff"/></g><path d="M6.8 15.5H0.5V0.5H10.5L15.5 4.5V7.3M15.5 10.7V15.5H10.4M10.8 0.5V3.9H15.5" fill="none" stroke="#8a8a8a" stroke-width="1"/></svg></span></div>
<div class="cell" style="left:1154px;top:585px;width:468px"><span>9a5ff8c48985b48fd7b104da324a8554c238fadeced0813f8df8a36c52dc20fa</span></div>
<div class="cell" style="left:1623px;top:585px;width:51px"><span>30.0</span></div>
<div class="cell" style="left:1675px;top:585px;width:107px"><span>XOF18,112.00</span></div>
<div class="cell" style="left:1783px;top:576px;width:50px"><span>已支付</span></div>
<div class="cell" style="left:1834px;top:576px;width:110px"><span>2024-06-22<br>13:02:43</span></div>
<div class="cell" style="left:1945px;top:585px;width:406px"><span>ok</span></div>
<div class="cell" style="left:2352px;top:576px;width:112px"><span>0.0.0.0<br>保留地址</span></div>
<div class="cell" style="left:2465px;top:576px;width:42px"><span>暂<br>无</span></div>
<div class="cb" style="left:272px;top:641px"></div>
<div class="cell" style="left:297px;top:642px;width:52px"><span>24726</span></div>
<div class="cell" style="left:350px;top:642px;width:282px"><span>TAMVW5AfyoA3nT3QzkifVRFUrDWFQy79VX</span></div>
<div class="cell" style="left:787px;top:642px;width:89px"><span>65612107</span></div>
<div class="cell" style="left:877px;top:642px;width:59px"><span>035886</span></div>
<div class="cell" style="left:937px;top:642px;width:80px"><span>Maks</span></div>
<div class="cell" style="left:1018px;top:642px;width:67px"><span>usdt</span></div>
<div class="img" style="left:1094px;top:633px"><span class="abs" style="left:1px;top:1px;line-height:0"><svg width="16" height="16" viewBox="0 0 16 16"><defs><linearGradient id="sky" x1="0" y1="0" x2="0" y2="1"><stop offset="0" stop-color="#c4d7f6"/><stop offset="1" stop-color="#aac3ee"/></linearGradient><clipPath id="pg"><path d="M0.5 0.5H10.5L15.5 4.5V7.3L6.8 15.5H0.5z M15.5 10.7V15.5H10.4z"/></clipPath></defs><g clip-path="url(#pg)"><rect x="0" y="0" width="16" height="16" fill="url(#sky)"/><path d="M1 16C1.8 12 4.5 9.6 7.3 9.6C9.3 9.6 10.6 10.6 11.4 11.8L15 15L14 16z" fill="#51ad3d"/><path d="M11.2 16C11.8 13.6 13 12.8 14 12.8C15 12.8 15.5 13.6 16 14.5V16z" fill="#51ad3d"/><path d="M2.2 5.6C2.3 4.6 3.2 4.3 3.9 4.6C4.4 3.3 6.2 3.1 7 4.2C7.8 4.2 8.3 4.8 8.2 5.6z" fill="#fff"/><path d="M10.5 0.5V4H15.5z" fill="#fff"/></g><path d="M6.8 15.5H0.5V0.5H10.5L15.5 4.5V7.3M15.5 10.7V15.5H10.4M10.8 0.5V3.9H15.5" fill="none" stroke="#8a8a8a" stroke-width="1"/></svg></span></div>
<div class="cell" style="left:1154px;top:642px;width:468px"><span>7c3f1e57de9f0bea2284bd79ed78cb4f25f44c3d9da5c1c9c375172d51842d1a</span></div>
<div class="cell" style="left:1623px;top:642px;width:51px"><span>5.1</span></div>
<div class="cell" style="left:1675px;top:642px;width:107px"><span>XOF3,060.00</span></div>
<div class="cell" style="left:1783px;top:633px;width:50px"><span>已支付</span></div>
<div class="cell" style="left:1834px;top:633px;width:110px"><span>2024-06-22<br>09:19:58</span></div>
<div class="cell" style="left:1945px;top:642px;width:406px"><span>OK</span></div>
<div class="cell" style="left:2352px;top:633px;width:112px"><span>15.204.86.93<br>美国</span></div>
<div class="cell" style="left:2465px;top:633px;width:42px"><span>暂<br>无</span></div>
<div class="cb" style="left:272px;top:698px"></div>
<div class="cell" style="left:297px;top:699px;width:52px"><span>24725</span></div>
<div class="cell" style="left:350px;top:699px;width:282px"><span>TAMVW5AfyoA3nT3QzkifVRFUrDWFQy79VX</span></div>
<div class="cell" style="left:787px;top:699px;width:89px"><span>65612107</span></div>
<div class="cell" style="left:877px;top:699px;width:59px"><span>035886</span></div>
<div class="cell" style="left:937px;top:699px;width:80px"><span>Maks</span></div>
<div class="cell" style="left:1018px;top:699px;width:67px"><span>usdt</span></div>
<div class="img" style="left:1094px;top:690px"><span class="abs" style="left:1px;top:1px;line-height:0"><svg width="16" height="16" viewBox="0 0 16 16"><defs><linearGradient id="sky" x1="0" y1="0" x2="0" y2="1"><stop offset="0" stop-color="#c4d7f6"/><stop offset="1" stop-color="#aac3ee"/></linearGradient><clipPath id="pg"><path d="M0.5 0.5H10.5L15.5 4.5V7.3L6.8 15.5H0.5z M15.5 10.7V15.5H10.4z"/></clipPath></defs><g clip-path="url(#pg)"><rect x="0" y="0" width="16" height="16" fill="url(#sky)"/><path d="M1 16C1.8 12 4.5 9.6 7.3 9.6C9.3 9.6 10.6 10.6 11.4 11.8L15 15L14 16z" fill="#51ad3d"/><path d="M11.2 16C11.8 13.6 13 12.8 14 12.8C15 12.8 15.5 13.6 16 14.5V16z" fill="#51ad3d"/><path d="M2.2 5.6C2.3 4.6 3.2 4.3 3.9 4.6C4.4 3.3 6.2 3.1 7 4.2C7.8 4.2 8.3 4.8 8.2 5.6z" fill="#fff"/><path d="M10.5 0.5V4H15.5z" fill="#fff"/></g><path d="M6.8 15.5H0.5V0.5H10.5L15.5 4.5V7.3M15.5 10.7V15.5H10.4M10.8 0.5V3.9H15.5" fill="none" stroke="#8a8a8a" stroke-width="1"/></svg></span></div>
<div class="cell" style="left:1154px;top:699px;width:468px"><span>7c3f1e57de9f0bea2284bd79ed78cb4f25f44c3d9da5c1c9c375172d51842d1a</span></div>
<div class="cell" style="left:1623px;top:699px;width:51px"><span>6.1</span></div>
<div class="cell" style="left:1675px;top:699px;width:107px"><span>XOF3,660.00</span></div>
<div class="cell" style="left:1783px;top:690px;width:50px"><span>已驳回</span></div>
<div class="cell" style="left:1834px;top:690px;width:110px"><span>2024-06-22<br>09:19:02</span></div>
<div class="cell" style="left:1945px;top:699px;width:406px"><span>Scored up</span></div>
<div class="cell" style="left:2352px;top:690px;width:112px"><span>15.204.86.93<br>美国</span></div>
<div class="cell" style="left:2465px;top:690px;width:42px"><span>暂<br>无</span></div>
<div class="cb" style="left:272px;top:755px"></div>
<div class="cell" style="left:297px;top:756px;width:52px"><span>24722</span></div>
<div class="cell" style="left:350px;top:756px;width:282px"><span>TAMVW5AfyoA3nT3QzkifVRFUrDWFQy79VX</span></div>
<div class="cell" style="left:787px;top:756px;width:89px"><span>65612107</span></div>
<div class="cell" style="left:877px;top:756px;width:59px"><span>035886</span></div>
<div class="cell" style="left:937px;top:756px;width:80px"><span>Maks</span></div>
<div class="cell" style="left:1018px;top:756px;width:67px"><span>usdt</span></div>
<div class="img" style="left:1094px;top:747px"><span class="abs" style="left:1px;top:1px;line-height:0"><svg width="16" height="16" viewBox="0 0 16 16"><defs><linearGradient id="sky" x1="0" y1="0" x2="0" y2="1"><stop offset="0" stop-color="#c4d7f6"/><stop offset="1" stop-color="#aac3ee"/></linearGradient><clipPath id="pg"><path d="M0.5 0.5H10.5L15.5 4.5V7.3L6.8 15.5H0.5z M15.5 10.7V15.5H10.4z"/></clipPath></defs><g clip-path="url(#pg)"><rect x="0" y="0" width="16" height="16" fill="url(#sky)"/><path d="M1 16C1.8 12 4.5 9.6 7.3 9.6C9.3 9.6 10.6 10.6 11.4 11.8L15 15L14 16z" fill="#51ad3d"/><path d="M11.2 16C11.8 13.6 13 12.8 14 12.8C15 12.8 15.5 13.6 16 14.5V16z" fill="#51ad3d"/><path d="M2.2 5.6C2.3 4.6 3.2 4.3 3.9 4.6C4.4 3.3 6.2 3.1 7 4.2C7.8 4.2 8.3 4.8 8.2 5.6z" fill="#fff"/><path d="M10.5 0.5V4H15.5z" fill="#fff"/></g><path d="M6.8 15.5H0.5V0.5H10.5L15.5 4.5V7.3M15.5 10.7V15.5H10.4M10.8 0.5V3.9H15.5" fill="none" stroke="#8a8a8a" stroke-width="1"/></svg></span></div>
<div class="cell" style="left:1154px;top:756px;width:468px"><span>7c3f1e57de9f0bea2284bd79ed78cb4f25f44c3d9da5c1c9c375172d51842d1a</span></div>
<div class="cell" style="left:1623px;top:756px;width:51px"><span>6.0</span></div>
<div class="cell" style="left:1675px;top:756px;width:107px"><span>XOF3,650.00</span></div>
<div class="cell" style="left:1783px;top:747px;width:50px"><span>已驳回</span></div>
<div class="cell" style="left:1834px;top:747px;width:110px"><span>2024-06-22<br>08:40:07</span></div>
<div class="cell" style="left:1945px;top:747px;width:406px"><span>The actual payment amount does not match the order amount, according to the actual payment amount</span></div>
<div class="cell" style="left:2352px;top:747px;width:112px"><span>15.204.86.93<br>美国</span></div>
<div class="cell" style="left:2465px;top:747px;width:42px"><span>暂<br>无</span></div>
<div class="cb" style="left:272px;top:812px"></div>
<div class="cell" style="left:297px;top:813px;width:52px"><span>24721</span></div>
<div class="cell" style="left:350px;top:813px;width:282px"><span>TAMVW5AfyoA3nT3QzkifVRFUrDWFQy79VX</span></div>
<div class="cell" style="left:787px;top:813px;width:89px"><span>65612107</span></div>
<div class="cell" style="left:877px;top:813px;width:59px"><span>035886</span></div>
<div class="cell" style="left:937px;top:813px;width:80px"><span>Maks</span></div>
<div class="cell" style="left:1018px;top:813px;width:67px"><span>usdt</span></div>
<div class="img" style="left:1094px;top:804px"><span class="abs" style="left:1px;top:1px;line-height:0"><svg width="16" height="16" viewBox="0 0 16 16"><defs><linearGradient id="sky" x1="0" y1="0" x2="0" y2="1"><stop offset="0" stop-color="#c4d7f6"/><stop offset="1" stop-color="#aac3ee"/></linearGradient><clipPath id="pg"><path d="M0.5 0.5H10.5L15.5 4.5V7.3L6.8 15.5H0.5z M15.5 10.7V15.5H10.4z"/></clipPath></defs><g clip-path="url(#pg)"><rect x="0" y="0" width="16" height="16" fill="url(#sky)"/><path d="M1 16C1.8 12 4.5 9.6 7.3 9.6C9.3 9.6 10.6 10.6 11.4 11.8L15 15L14 16z" fill="#51ad3d"/><path d="M11.2 16C11.8 13.6 13 12.8 14 12.8C15 12.8 15.5 13.6 16 14.5V16z" fill="#51ad3d"/><path d="M2.2 5.6C2.3 4.6 3.2 4.3 3.9 4.6C4.4 3.3 6.2 3.1 7 4.2C7.8 4.2 8.3 4.8 8.2 5.6z" fill="#fff"/><path d="M10.5 0.5V4H15.5z" fill="#fff"/></g><path d="M6.8 15.5H0.5V0.5H10.5L15.5 4.5V7.3M15.5 10.7V15.5H10.4M10.8 0.5V3.9H15.5" fill="none" stroke="#8a8a8a" stroke-width="1"/></svg></span></div>
<div class="cell" style="left:1154px;top:813px;width:468px"><span>7c3f1e57de9f0bea2284bd79ed78cb4f25f44c3d9da5c1c9c375172d51842d1a</span></div>
<div class="cell" style="left:1623px;top:813px;width:51px"><span>5.5</span></div>
<div class="cell" style="left:1675px;top:813px;width:107px"><span>XOF3,350.00</span></div>
<div class="cell" style="left:1783px;top:804px;width:50px"><span>已驳回</span></div>
<div class="cell" style="left:1834px;top:804px;width:110px"><span>2024-06-22<br>08:32:52</span></div>
<div class="cell" style="left:1945px;top:804px;width:406px"><span>The actual payment amount does not match the order amount, according to the actual payment amount</span></div>
<div class="cell" style="left:2352px;top:804px;width:112px"><span>15.204.86.93<br>美国</span></div>
<div class="cell" style="left:2465px;top:804px;width:42px"><span>暂<br>无</span></div>
<div class="cb" style="left:272px;top:869px"></div>
<div class="cell" style="left:297px;top:870px;width:52px"><span>24717</span></div>
<div class="cell" style="left:350px;top:870px;width:282px"><span>TAMVW5AfyoA3nT3QzkifVRFUrDWFQy79VX</span></div>
<div class="cell" style="left:787px;top:870px;width:89px"><span>65612107</span></div>
<div class="cell" style="left:877px;top:870px;width:59px"><span>035886</span></div>
<div class="cell" style="left:937px;top:870px;width:80px"><span>Maks</span></div>
<div class="cell" style="left:1018px;top:870px;width:67px"><span>usdt</span></div>
<div class="img" style="left:1094px;top:861px"><span class="abs" style="left:1px;top:1px;line-height:0"><svg width="16" height="16" viewBox="0 0 16 16"><defs><linearGradient id="sky" x1="0" y1="0" x2="0" y2="1"><stop offset="0" stop-color="#c4d7f6"/><stop offset="1" stop-color="#aac3ee"/></linearGradient><clipPath id="pg"><path d="M0.5 0.5H10.5L15.5 4.5V7.3L6.8 15.5H0.5z M15.5 10.7V15.5H10.4z"/></clipPath></defs><g clip-path="url(#pg)"><rect x="0" y="0" width="16" height="16" fill="url(#sky)"/><path d="M1 16C1.8 12 4.5 9.6 7.3 9.6C9.3 9.6 10.6 10.6 11.4 11.8L15 15L14 16z" fill="#51ad3d"/><path d="M11.2 16C11.8 13.6 13 12.8 14 12.8C15 12.8 15.5 13.6 16 14.5V16z" fill="#51ad3d"/><path d="M2.2 5.6C2.3 4.6 3.2 4.3 3.9 4.6C4.4 3.3 6.2 3.1 7 4.2C7.8 4.2 8.3 4.8 8.2 5.6z" fill="#fff"/><path d="M10.5 0.5V4H15.5z" fill="#fff"/></g><path d="M6.8 15.5H0.5V0.5H10.5L15.5 4.5V7.3M15.5 10.7V15.5H10.4M10.8 0.5V3.9H15.5" fill="none" stroke="#8a8a8a" stroke-width="1"/></svg></span></div>
<div class="cell" style="left:1154px;top:870px;width:468px"><span>7c3f1e57de9f0bea2284bd79ed78cb4f25f44c3d9da5c1c9c375172d51842d1a</span></div>
<div class="cell" style="left:1623px;top:870px;width:51px"><span>6.0</span></div>
<div class="cell" style="left:1675px;top:870px;width:107px"><span>XOF3,600.00</span></div>
<div class="cell" style="left:1783px;top:861px;width:50px"><span>已驳回</span></div>
<div class="cell" style="left:1834px;top:861px;width:110px"><span>2024-06-22<br>08:29:00</span></div>
<div class="cell" style="left:1945px;top:861px;width:406px"><span>The actual payment amount does not match the order amount, according to the actual payment amount</span></div>
<div class="cell" style="left:2352px;top:861px;width:112px"><span>15.204.86.93<br>美国</span></div>
<div class="cell" style="left:2465px;top:861px;width:42px"><span>暂<br>无</span></div>
<div class="cb" style="left:272px;top:926px"></div>
<div class="cell" style="left:297px;top:927px;width:52px"><span>24716</span></div>
<div class="cell" style="left:350px;top:927px;width:282px"><span>TAMVW5AfyoA3nT3QzkifVRFUrDWFQy79VX</span></div>
<div class="cell" style="left:787px;top:927px;width:89px"><span>65612107</span></div>
<div class="cell" style="left:877px;top:927px;width:59px"><span>035886</span></div>
<div class="cell" style="left:937px;top:927px;width:80px"><span>Maks</span></div>
<div class="cell" style="left:1018px;top:927px;width:67px"><span>usdt</span></div>
<div class="img" style="left:1094px;top:918px"><span class="abs" style="left:1px;top:1px;line-height:0"><svg width="16" height="16" viewBox="0 0 16 16"><defs><linearGradient id="sky" x1="0" y1="0" x2="0" y2="1"><stop offset="0" stop-color="#c4d7f6"/><stop offset="1" stop-color="#aac3ee"/></linearGradient><clipPath id="pg"><path d="M0.5 0.5H10.5L15.5 4.5V7.3L6.8 15.5H0.5z M15.5 10.7V15.5H10.4z"/></clipPath></defs><g clip-path="url(#pg)"><rect x="0" y="0" width="16" height="16" fill="url(#sky)"/><path d="M1 16C1.8 12 4.5 9.6 7.3 9.6C9.3 9.6 10.6 10.6 11.4 11.8L15 15L14 16z" fill="#51ad3d"/><path d="M11.2 16C11.8 13.6 13 12.8 14 12.8C15 12.8 15.5 13.6 16 14.5V16z" fill="#51ad3d"/><path d="M2.2 5.6C2.3 4.6 3.2 4.3 3.9 4.6C4.4 3.3 6.2 3.1 7 4.2C7.8 4.2 8.3 4.8 8.2 5.6z" fill="#fff"/><path d="M10.5 0.5V4H15.5z" fill="#fff"/></g><path d="M6.8 15.5H0.5V0.5H10.5L15.5 4.5V7.3M15.5 10.7V15.5H10.4M10.8 0.5V3.9H15.5" fill="none" stroke="#8a8a8a" stroke-width="1"/></svg></span></div>
<div class="cell" style="left:1154px;top:927px;width:468px"><span>7c3f1e57de9f0bea2284bd79ed78cb4f25f44c3d9da5c1c9c375172d51842d1a</span></div>
<div class="cell" style="left:1623px;top:927px;width:51px"><span>6.0</span></div>
<div class="cell" style="left:1675px;top:927px;width:107px"><span>XOF3,650.00</span></div>
<div class="cell" style="left:1783px;top:918px;width:50px"><span>已驳回</span></div>
<div class="cell" style="left:1834px;top:918px;width:110px"><span>2024-06-22<br>08:16:36</span></div>
<div class="cell" style="left:1945px;top:918px;width:406px"><span>The actual payment amount does not match the order amount, according to the actual payment amount</span></div>
<div class="cell" style="left:2352px;top:918px;width:112px"><span>15.204.86.93<br>美国</span></div>
<div class="cell" style="left:2465px;top:918px;width:42px"><span>暂<br>无</span></div>
<div class="cb" style="left:272px;top:983px"></div>
<div class="cell" style="left:297px;top:984px;width:52px"><span>24712</span></div>
<div class="cell" style="left:350px;top:984px;width:282px"><span>TAMVW5AfyoA3nT3QzkifVRFUrDWFQy79VX</span></div>
<div class="cell" style="left:787px;top:984px;width:89px"><span>0985107313</span></div>
<div class="cell" style="left:877px;top:984px;width:59px"><span>219905</span></div>
<div class="cell" style="left:937px;top:984px;width:80px"><span>MESSI999</span></div>
<div class="cell" style="left:1018px;top:984px;width:67px"><span>usdt</span></div>
<div class="img" style="left:1094px;top:975px"><span class="abs" style="left:1px;top:1px;line-height:0"><svg width="16" height="16" viewBox="0 0 16 16"><defs><linearGradient id="sky" x1="0" y1="0" x2="0" y2="1"><stop offset="0" stop-color="#c4d7f6"/><stop offset="1" stop-color="#aac3ee"/></linearGradient><clipPath id="pg"><path d="M0.5 0.5H10.5L15.5 4.5V7.3L6.8 15.5H0.5z M15.5 10.7V15.5H10.4z"/></clipPath></defs><g clip-path="url(#pg)"><rect x="0" y="0" width="16" height="16" fill="url(#sky)"/><path d="M1 16C1.8 12 4.5 9.6 7.3 9.6C9.3 9.6 10.6 10.6 11.4 11.8L15 15L14 16z" fill="#51ad3d"/><path d="M11.2 16C11.8 13.6 13 12.8 14 12.8C15 12.8 15.5 13.6 16 14.5V16z" fill="#51ad3d"/><path d="M2.2 5.6C2.3 4.6 3.2 4.3 3.9 4.6C4.4 3.3 6.2 3.1 7 4.2C7.8 4.2 8.3 4.8 8.2 5.6z" fill="#fff"/><path d="M10.5 0.5V4H15.5z" fill="#fff"/></g><path d="M6.8 15.5H0.5V0.5H10.5L15.5 4.5V7.3M15.5 10.7V15.5H10.4M10.8 0.5V3.9H15.5" fill="none" stroke="#8a8a8a" stroke-width="1"/></svg></span></div>
<div class="cell" style="left:1154px;top:984px;width:468px"><span>b7ce9979c94ce2f00cc8cbd4fa6e066b27a73f749b30087b292694e7fc68efaa</span></div>
<div class="cell" style="left:1623px;top:984px;width:51px"><span>62.9</span></div>
<div class="cell" style="left:1675px;top:984px;width:107px"><span>XOF38,000.00</span></div>
<div class="cell" style="left:1783px;top:975px;width:50px"><span>已支付</span></div>
<div class="cell" style="left:1834px;top:975px;width:110px"><span>2024-06-22<br>06:07:26</span></div>
<div class="cell" style="left:1945px;top:984px;width:406px"><span>OK</span></div>
<div class="cell" style="left:2352px;top:975px;width:112px"><span>0.0.0.0<br>保留地址</span></div>
<div class="cell" style="left:2465px;top:975px;width:42px"><span>暂<br>无</span></div>
<div class="cb" style="left:272px;top:1040px"></div>
<div class="cell" style="left:297px;top:1041px;width:52px"><span>24704</span></div>
<div class="cell" style="left:350px;top:1041px;width:282px"><span>TAMVW5AfyoA3nT3QzkifVRFUrDWFQy79VX</span></div>
<div class="cell" style="left:787px;top:1041px;width:89px"><span>99464321</span></div>
<div class="cell" style="left:877px;top:1041px;width:59px"><span>388563</span></div>
<div class="cell" style="left:937px;top:1041px;width:80px"><span>expertgsmt</span></div>
<div class="cell" style="left:1018px;top:1041px;width:67px"><span>usdt</span></div>
<div class="img" style="left:1094px;top:1032px"><span class="abs" style="left:1px;top:1px;line-height:0"><svg width="16" height="16" viewBox="0 0 16 16"><defs><linearGradient id="sky" x1="0" y1="0" x2="0" y2="1"><stop offset="0" stop-color="#c4d7f6"/><stop offset="1" stop-color="#aac3ee"/></linearGradient><clipPath id="pg"><path d="M0.5 0.5H10.5L15.5 4.5V7.3L6.8 15.5H0.5z M15.5 10.7V15.5H10.4z"/></clipPath></defs><g clip-path="url(#pg)"><rect x="0" y="0" width="16" height="16" fill="url(#sky)"/><path d="M1 16C1.8 12 4.5 9.6 7.3 9.6C9.3 9.6 10.6 10.6 11.4 11.8L15 15L14 16z" fill="#51ad3d"/><path d="M11.2 16C11.8 13.6 13 12.8 14 12.8C15 12.8 15.5 13.6 16 14.5V16z" fill="#51ad3d"/><path d="M2.2 5.6C2.3 4.6 3.2 4.3 3.9 4.6C4.4 3.3 6.2 3.1 7 4.2C7.8 4.2 8.3 4.8 8.2 5.6z" fill="#fff"/><path d="M10.5 0.5V4H15.5z" fill="#fff"/></g><path d="M6.8 15.5H0.5V0.5H10.5L15.5 4.5V7.3M15.5 10.7V15.5H10.4M10.8 0.5V3.9H15.5" fill="none" stroke="#8a8a8a" stroke-width="1"/></svg></span></div>
<div class="cell" style="left:1154px;top:1041px;width:468px"><span>ff7d1b5d10579789b4201dc7710f31b89c8f807d58913b4e0b1b37007e3f9df8</span></div>
<div class="cell" style="left:1623px;top:1041px;width:51px"><span>9.9</span></div>
<div class="cell" style="left:1675px;top:1041px;width:107px"><span>XOF6,000.00</span></div>
<div class="cell" style="left:1783px;top:1032px;width:50px"><span>已支付</span></div>
<div class="cell" style="left:1834px;top:1032px;width:110px"><span>2024-06-21<br>22:32:44</span></div>
<div class="cell" style="left:1945px;top:1041px;width:406px"><span>ok</span></div>
<div class="cell" style="left:2352px;top:1032px;width:112px"><span>0.0.0.0<br>保留地址</span></div>
<div class="cell" style="left:2465px;top:1032px;width:42px"><span>暂<br>无</span></div>
<div class="cb" style="left:272px;top:1097px"></div>
<div class="cell" style="left:297px;top:1098px;width:52px"><span>24701</span></div>
<div class="cell" style="left:350px;top:1098px;width:282px"><span>TAMVW5AfyoA3nT3QzkifVRFUrDWFQy79VX</span></div>
<div class="cell" style="left:787px;top:1098px;width:89px"><span>61051095</span></div>
<div class="cell" style="left:877px;top:1098px;width:59px"><span>652280</span></div>
<div class="cell" style="left:937px;top:1098px;width:80px"><span>-</span></div>
<div class="cell" style="left:1018px;top:1098px;width:67px"><span>usdt</span></div>
<div class="img" style="left:1094px;top:1089px"><span class="abs" style="left:1px;top:1px;line-height:0"><svg width="16" height="16" viewBox="0 0 16 16"><defs><linearGradient id="sky" x1="0" y1="0" x2="0" y2="1"><stop offset="0" stop-color="#c4d7f6"/><stop offset="1" stop-color="#aac3ee"/></linearGradient><clipPath id="pg"><path d="M0.5 0.5H10.5L15.5 4.5V7.3L6.8 15.5H0.5z M15.5 10.7V15.5H10.4z"/></clipPath></defs><g clip-path="url(#pg)"><rect x="0" y="0" width="16" height="16" fill="url(#sky)"/><path d="M1 16C1.8 12 4.5 9.6 7.3 9.6C9.3 9.6 10.6 10.6 11.4 11.8L15 15L14 16z" fill="#51ad3d"/><path d="M11.2 16C11.8 13.6 13 12.8 14 12.8C15 12.8 15.5 13.6 16 14.5V16z" fill="#51ad3d"/><path d="M2.2 5.6C2.3 4.6 3.2 4.3 3.9 4.6C4.4 3.3 6.2 3.1 7 4.2C7.8 4.2 8.3 4.8 8.2 5.6z" fill="#fff"/><path d="M10.5 0.5V4H15.5z" fill="#fff"/></g><path d="M6.8 15.5H0.5V0.5H10.5L15.5 4.5V7.3M15.5 10.7V15.5H10.4M10.8 0.5V3.9H15.5" fill="none" stroke="#8a8a8a" stroke-width="1"/></svg></span></div>
<div class="cell" style="left:1154px;top:1098px;width:468px"><span>b6fca3a5d3fa8d68c948c5a5aac94b3b8db5f5a7abaa2e1851884e70fe805bd5</span></div>
<div class="cell" style="left:1623px;top:1098px;width:51px"><span>6.0</span></div>
<div class="cell" style="left:1675px;top:1098px;width:107px"><span>XOF3,600.00</span></div>
<div class="cell" style="left:1783px;top:1089px;width:50px"><span>已支付</span></div>
<div class="cell" style="left:1834px;top:1089px;width:110px"><span>2024-06-21<br>20:56:04</span></div>
<div class="cell" style="left:1945px;top:1098px;width:406px"><span>OK</span></div>
<div class="cell" style="left:2352px;top:1089px;width:112px"><span>0.0.0.0<br>保留地址</span></div>
<div class="cell" style="left:2465px;top:1089px;width:42px"><span>暂<br>无</span></div>
<div class="cb" style="left:272px;top:1154px"></div>
<div class="cell" style="left:297px;top:1155px;width:52px"><span>24700</span></div>
<div class="cell" style="left:350px;top:1155px;width:282px"><span>TAMVW5AfyoA3nT3QzkifVRFUrDWFQy79VX</span></div>
<div class="cell" style="left:787px;top:1155px;width:89px"><span>61051095</span></div>
<div class="cell" style="left:877px;top:1155px;width:59px"><span>652280</span></div>
<div class="cell" style="left:937px;top:1155px;width:80px"><span>-</span></div>
<div class="cell" style="left:1018px;top:1155px;width:67px"><span>usdt</span></div>
<div class="img" style="left:1094px;top:1146px"><span class="abs" style="left:1px;top:1px;line-height:0"><svg width="16" height="16" viewBox="0 0 16 16"><defs><linearGradient id="sky" x1="0" y1="0" x2="0" y2="1"><stop offset="0" stop-color="#c4d7f6"/><stop offset="1" stop-color="#aac3ee"/></linearGradient><clipPath id="pg"><path d="M0.5 0.5H10.5L15.5 4.5V7.3L6.8 15.5H0.5z M15.5 10.7V15.5H10.4z"/></clipPath></defs><g clip-path="url(#pg)"><rect x="0" y="0" width="16" height="16" fill="url(#sky)"/><path d="M1 16C1.8 12 4.5 9.6 7.3 9.6C9.3 9.6 10.6 10.6 11.4 11.8L15 15L14 16z" fill="#51ad3d"/><path d="M11.2 16C11.8 13.6 13 12.8 14 12.8C15 12.8 15.5 13.6 16 14.5V16z" fill="#51ad3d"/><path d="M2.2 5.6C2.3 4.6 3.2 4.3 3.9 4.6C4.4 3.3 6.2 3.1 7 4.2C7.8 4.2 8.3 4.8 8.2 5.6z" fill="#fff"/><path d="M10.5 0.5V4H15.5z" fill="#fff"/></g><path d="M6.8 15.5H0.5V0.5H10.5L15.5 4.5V7.3M15.5 10.7V15.5H10.4M10.8 0.5V3.9H15.5" fill="none" stroke="#8a8a8a" stroke-width="1"/></svg></span></div>
<div class="cell" style="left:1154px;top:1155px;width:468px"><span>b6fca3a5d3fa8d68c948c5a5aac94b3b8db5f5a7abaa2e1851884e70fe805bd5</span></div>
<div class="cell" style="left:1623px;top:1155px;width:51px"><span>5.0</span></div>
<div class="cell" style="left:1675px;top:1155px;width:107px"><span>XOF3,000.00</span></div>
<div class="cell" style="left:1783px;top:1146px;width:50px"><span>已驳回</span></div>
<div class="cell" style="left:1834px;top:1146px;width:110px"><span>2024-06-21<br>20:49:48</span></div>
<div class="cell" style="left:1945px;top:1155px;width:406px"><span>1</span></div>
<div class="cell" style="left:2352px;top:1146px;width:112px"><span>0.0.0.0<br>保留地址</span></div>
<div class="cell" style="left:2465px;top:1146px;width:42px"><span>暂<br>无</span></div>
<div class="cb" style="left:272px;top:1211px"></div>
<div class="cell" style="left:297px;top:1212px;width:52px"><span>24640</span></div>
<div class="cell" style="left:350px;top:1212px;width:282px"><span>TAMVW5AfyoA3nT3QzkifVRFUrDWFQy79VX</span></div>
<div class="cell" style="left:787px;top:1212px;width:89px"><span>6970878061</span></div>
<div class="cell" style="left:877px;top:1212px;width:59px"><span>039916</span></div>
<div class="cell" style="left:937px;top:1212px;width:80px"><span>Зоя</span></div>
<div class="cell" style="left:1018px;top:1212px;width:67px"><span>usdt</span></div>
<div class="img" style="left:1094px;top:1203px"><span class="abs" style="left:1px;top:1px;line-height:0"><svg width="16" height="16" viewBox="0 0 16 16"><defs><linearGradient id="sky" x1="0" y1="0" x2="0" y2="1"><stop offset="0" stop-color="#c4d7f6"/><stop offset="1" stop-color="#aac3ee"/></linearGradient><clipPath id="pg"><path d="M0.5 0.5H10.5L15.5 4.5V7.3L6.8 15.5H0.5z M15.5 10.7V15.5H10.4z"/></clipPath></defs><g clip-path="url(#pg)"><rect x="0" y="0" width="16" height="16" fill="url(#sky)"/><path d="M1 16C1.8 12 4.5 9.6 7.3 9.6C9.3 9.6 10.6 10.6 11.4 11.8L15 15L14 16z" fill="#51ad3d"/><path d="M11.2 16C11.8 13.6 13 12.8 14 12.8C15 12.8 15.5 13.6 16 14.5V16z" fill="#51ad3d"/><path d="M2.2 5.6C2.3 4.6 3.2 4.3 3.9 4.6C4.4 3.3 6.2 3.1 7 4.2C7.8 4.2 8.3 4.8 8.2 5.6z" fill="#fff"/><path d="M10.5 0.5V4H15.5z" fill="#fff"/></g><path d="M6.8 15.5H0.5V0.5H10.5L15.5 4.5V7.3M15.5 10.7V15.5H10.4M10.8 0.5V3.9H15.5" fill="none" stroke="#8a8a8a" stroke-width="1"/></svg></span></div>
<div class="cell" style="left:1154px;top:1212px;width:468px"><span>TAMVW5AfyoA3nT3QzkifVRFUrDWFQy79VX</span></div>
<div class="cell" style="left:1623px;top:1212px;width:51px"><span>0.0</span></div>
<div class="cell" style="left:1675px;top:1212px;width:107px"><span>XOF30.00</span></div>
<div class="cell" style="left:1783px;top:1203px;width:50px"><span>已驳回</span></div>
<div class="cell" style="left:1834px;top:1203px;width:110px"><span>2024-06-21<br>16:17:55</span></div>
<div class="cell" style="left:1945px;top:1212px;width:406px"><span>1</span></div>
<div class="cell" style="left:2352px;top:1203px;width:112px"><span>0.0.0.0<br>保留地址</span></div>
<div class="cell" style="left:2465px;top:1203px;width:42px"><span>暂<br>无</span></div>
<div class="cb" style="left:272px;top:1268px"></div>
<div class="cell" style="left:297px;top:1269px;width:52px"><span>24639</span></div>
<div class="cell" style="left:350px;top:1269px;width:282px"><span>TAMVW5AfyoA3nT3QzkifVRFUrDWFQy79VX</span></div>
<div class="cell" style="left:787px;top:1269px;width:89px"><span>6970878061</span></div>
<div class="cell" style="left:877px;top:1269px;width:59px"><span>039916</span></div>
<div class="cell" style="left:937px;top:1269px;width:80px"><span>Зоя</span></div>
<div class="cell" style="left:1018px;top:1269px;width:67px"><span>usdt</span></div>
<div class="img" style="left:1094px;top:1260px"><span class="abs" style="left:1px;top:1px;line-height:0"><svg width="16" height="16" viewBox="0 0 16 16"><defs><linearGradient id="sky" x1="0" y1="0" x2="0" y2="1"><stop offset="0" stop-color="#c4d7f6"/><stop offset="1" stop-color="#aac3ee"/></linearGradient><clipPath id="pg"><path d="M0.5 0.5H10.5L15.5 4.5V7.3L6.8 15.5H0.5z M15.5 10.7V15.5H10.4z"/></clipPath></defs><g clip-path="url(#pg)"><rect x="0" y="0" width="16" height="16" fill="url(#sky)"/><path d="M1 16C1.8 12 4.5 9.6 7.3 9.6C9.3 9.6 10.6 10.6 11.4 11.8L15 15L14 16z" fill="#51ad3d"/><path d="M11.2 16C11.8 13.6 13 12.8 14 12.8C15 12.8 15.5 13.6 16 14.5V16z" fill="#51ad3d"/><path d="M2.2 5.6C2.3 4.6 3.2 4.3 3.9 4.6C4.4 3.3 6.2 3.1 7 4.2C7.8 4.2 8.3 4.8 8.2 5.6z" fill="#fff"/><path d="M10.5 0.5V4H15.5z" fill="#fff"/></g><path d="M6.8 15.5H0.5V0.5H10.5L15.5 4.5V7.3M15.5 10.7V15.5H10.4M10.8 0.5V3.9H15.5" fill="none" stroke="#8a8a8a" stroke-width="1"/></svg></span></div>
<div class="cell" style="left:1154px;top:1269px;width:468px"><span>TAMVW5AfyoA3nT3QzkifVRFUrDWFQy79VX</span></div>
<div class="cell" style="left:1623px;top:1269px;width:51px"><span>0.0</span></div>
<div class="cell" style="left:1675px;top:1269px;width:107px"><span>XOF30.00</span></div>
<div class="cell" style="left:1783px;top:1260px;width:50px"><span>已驳回</span></div>
<div class="cell" style="left:1834px;top:1260px;width:110px"><span>2024-06-21<br>16:17:55</span></div>
<div class="cell" style="left:1945px;top:1269px;width:406px"><span>1</span></div>
<div class="cell" style="left:2352px;top:1260px;width:112px"><span>0.0.0.0<br>保留地址</span></div>
<div class="cell" style="left:2465px;top:1260px;width:42px"><span>暂<br>无</span></div>
<svg class="abs" style="left:0;top:0;overflow:visible" width="2560" height="1271" viewBox="0 0 2560 1271"><circle cx="1758" cy="326.5" r="139.4" fill="none" stroke="#f00" stroke-width="5.4"/><text x="0" y="0" transform="translate(1645.0,352.6) rotate(-103.0) scale(0.78,1)" font-family="Liberation Sans" font-weight="bold" font-size="27" fill="#f00" stroke="#f00" stroke-width="0.5" text-anchor="middle" dominant-baseline="central">w</text><text x="0" y="0" transform="translate(1642.0,326.3) rotate(-89.9) scale(0.78,1)" font-family="Liberation Sans" font-weight="bold" font-size="27" fill="#f00" stroke="#f00" stroke-width="0.5" text-anchor="middle" dominant-baseline="central">w</text><text x="0" y="0" transform="translate(1645.1,300.0) rotate(-76.8) scale(0.78,1)" font-family="Liberation Sans" font-weight="bold" font-size="27" fill="#f00" stroke="#f00" stroke-width="0.5" text-anchor="middle" dominant-baseline="central">w</text><text x="0" y="0" transform="translate(1654.0,275.1) rotate(-63.7) scale(0.78,1)" font-family="Liberation Sans" font-weight="bold" font-size="27" fill="#f00" stroke="#f00" stroke-width="0.5" text-anchor="middle" dominant-baseline="central">.</text><text x="0" y="0" transform="translate(1668.4,252.9) rotate(-50.6) scale(0.78,1)" font-family="Liberation Sans" font-weight="bold" font-size="27" fill="#f00" stroke="#f00" stroke-width="0.5" text-anchor="middle" dominant-baseline="central">h</text><text x="0" y="0" transform="translate(1687.4,234.5) rotate(-37.5) scale(0.78,1)" font-family="Liberation Sans" font-weight="bold" font-size="27" fill="#f00" stroke="#f00" stroke-width="0.5" text-anchor="middle" dominant-baseline="central">a</text><text x="0" y="0" transform="translate(1710.1,220.9) rotate(-24.4) scale(0.78,1)" font-family="Liberation Sans" font-weight="bold" font-size="27" fill="#f00" stroke="#f00" stroke-width="0.5" text-anchor="middle" dominant-baseline="central">i</text><text x="0" y="0" transform="translate(1735.3,212.7) rotate(-11.3) scale(0.78,1)" font-family="Liberation Sans" font-weight="bold" font-size="27" fill="#f00" stroke="#f00" stroke-width="0.5" text-anchor="middle" dominant-baseline="central">w</text><text x="0" y="0" transform="translate(1761.6,210.6) rotate(1.8) scale(0.78,1)" font-family="Liberation Sans" font-weight="bold" font-size="27" fill="#f00" stroke="#f00" stroke-width="0.5" text-anchor="middle" dominant-baseline="central">a</text><text x="0" y="0" transform="translate(1787.8,214.4) rotate(14.9) scale(0.78,1)" font-family="Liberation Sans" font-weight="bold" font-size="27" fill="#f00" stroke="#f00" stroke-width="0.5" text-anchor="middle" dominant-baseline="central">i</text><text x="0" y="0" transform="translate(1812.5,224.1) rotate(28.0) scale(0.78,1)" font-family="Liberation Sans" font-weight="bold" font-size="27" fill="#f00" stroke="#f00" stroke-width="0.5" text-anchor="middle" dominant-baseline="central">y</text><text x="0" y="0" transform="translate(1834.3,239.1) rotate(41.1) scale(0.78,1)" font-family="Liberation Sans" font-weight="bold" font-size="27" fill="#f00" stroke="#f00" stroke-width="0.5" text-anchor="middle" dominant-baseline="central">m</text><text x="0" y="0" transform="translate(1852.1,258.6) rotate(54.2) scale(0.78,1)" font-family="Liberation Sans" font-weight="bold" font-size="27" fill="#f00" stroke="#f00" stroke-width="0.5" text-anchor="middle" dominant-baseline="central">.</text><text x="0" y="0" transform="translate(1865.0,281.7) rotate(67.3) scale(0.78,1)" font-family="Liberation Sans" font-weight="bold" font-size="27" fill="#f00" stroke="#f00" stroke-width="0.5" text-anchor="middle" dominant-baseline="central">c</text><text x="0" y="0" transform="translate(1872.4,307.2) rotate(80.4) scale(0.78,1)" font-family="Liberation Sans" font-weight="bold" font-size="27" fill="#f00" stroke="#f00" stroke-width="0.5" text-anchor="middle" dominant-baseline="central">o</text><text x="0" y="0" transform="translate(1873.8,333.6) rotate(93.5) scale(0.78,1)" font-family="Liberation Sans" font-weight="bold" font-size="27" fill="#f00" stroke="#f00" stroke-width="0.5" text-anchor="middle" dominant-baseline="central">m</text><text x="0" y="0" transform="translate(1682.9,427.7) rotate(36.6)" font-family="Liberation Sans" font-size="13" fill="#f00" text-anchor="middle" dominant-baseline="central">h</text><text x="0" y="0" transform="translate(1694.9,435.6) rotate(30.1)" font-family="Liberation Sans" font-size="13" fill="#f00" text-anchor="middle" dominant-baseline="central">a</text><text x="0" y="0" transform="translate(1707.8,442.0) rotate(23.5)" font-family="Liberation Sans" font-size="13" fill="#f00" text-anchor="middle" dominant-baseline="central">i</text><text x="0" y="0" transform="translate(1721.3,447.0) rotate(17.0)" font-family="Liberation Sans" font-size="13" fill="#f00" text-anchor="middle" dominant-baseline="central">w</text><text x="0" y="0" transform="translate(1735.3,450.4) rotate(10.4)" font-family="Liberation Sans" font-size="13" fill="#f00" text-anchor="middle" dominant-baseline="central">a</text><text x="0" y="0" transform="translate(1749.5,452.2) rotate(3.9)" font-family="Liberation Sans" font-size="13" fill="#f00" text-anchor="middle" dominant-baseline="central">i</text><text x="0" y="0" transform="translate(1763.9,452.4) rotate(-2.7)" font-family="Liberation Sans" font-size="13" fill="#f00" text-anchor="middle" dominant-baseline="central">y</text><text x="0" y="0" transform="translate(1778.3,450.9) rotate(-9.2)" font-family="Liberation Sans" font-size="13" fill="#f00" text-anchor="middle" dominant-baseline="central">m</text><text x="0" y="0" transform="translate(1792.3,447.7) rotate(-15.8)" font-family="Liberation Sans" font-size="13" fill="#f00" text-anchor="middle" dominant-baseline="central">.</text><text x="0" y="0" transform="translate(1805.9,443.0) rotate(-22.3)" font-family="Liberation Sans" font-size="13" fill="#f00" text-anchor="middle" dominant-baseline="central">c</text><text x="0" y="0" transform="translate(1818.9,436.8) rotate(-28.9)" font-family="Liberation Sans" font-size="13" fill="#f00" text-anchor="middle" dominant-baseline="central">o</text><text x="0" y="0" transform="translate(1831.1,429.1) rotate(-35.4)" font-family="Liberation Sans" font-size="13" fill="#f00" text-anchor="middle" dominant-baseline="central">m</text><text x="1759" y="406" font-family="Liberation Mono" font-weight="bold" font-size="28" fill="#f00" text-anchor="middle">haiwaiym.com</text><text x="1761" y="338" font-family="Liberation Serif, serif" font-weight="normal" font-size="37" letter-spacing="3" fill="#f00" stroke="#f00" stroke-width="0.9" text-anchor="middle">海外源码</text></svg>
</body></html>
